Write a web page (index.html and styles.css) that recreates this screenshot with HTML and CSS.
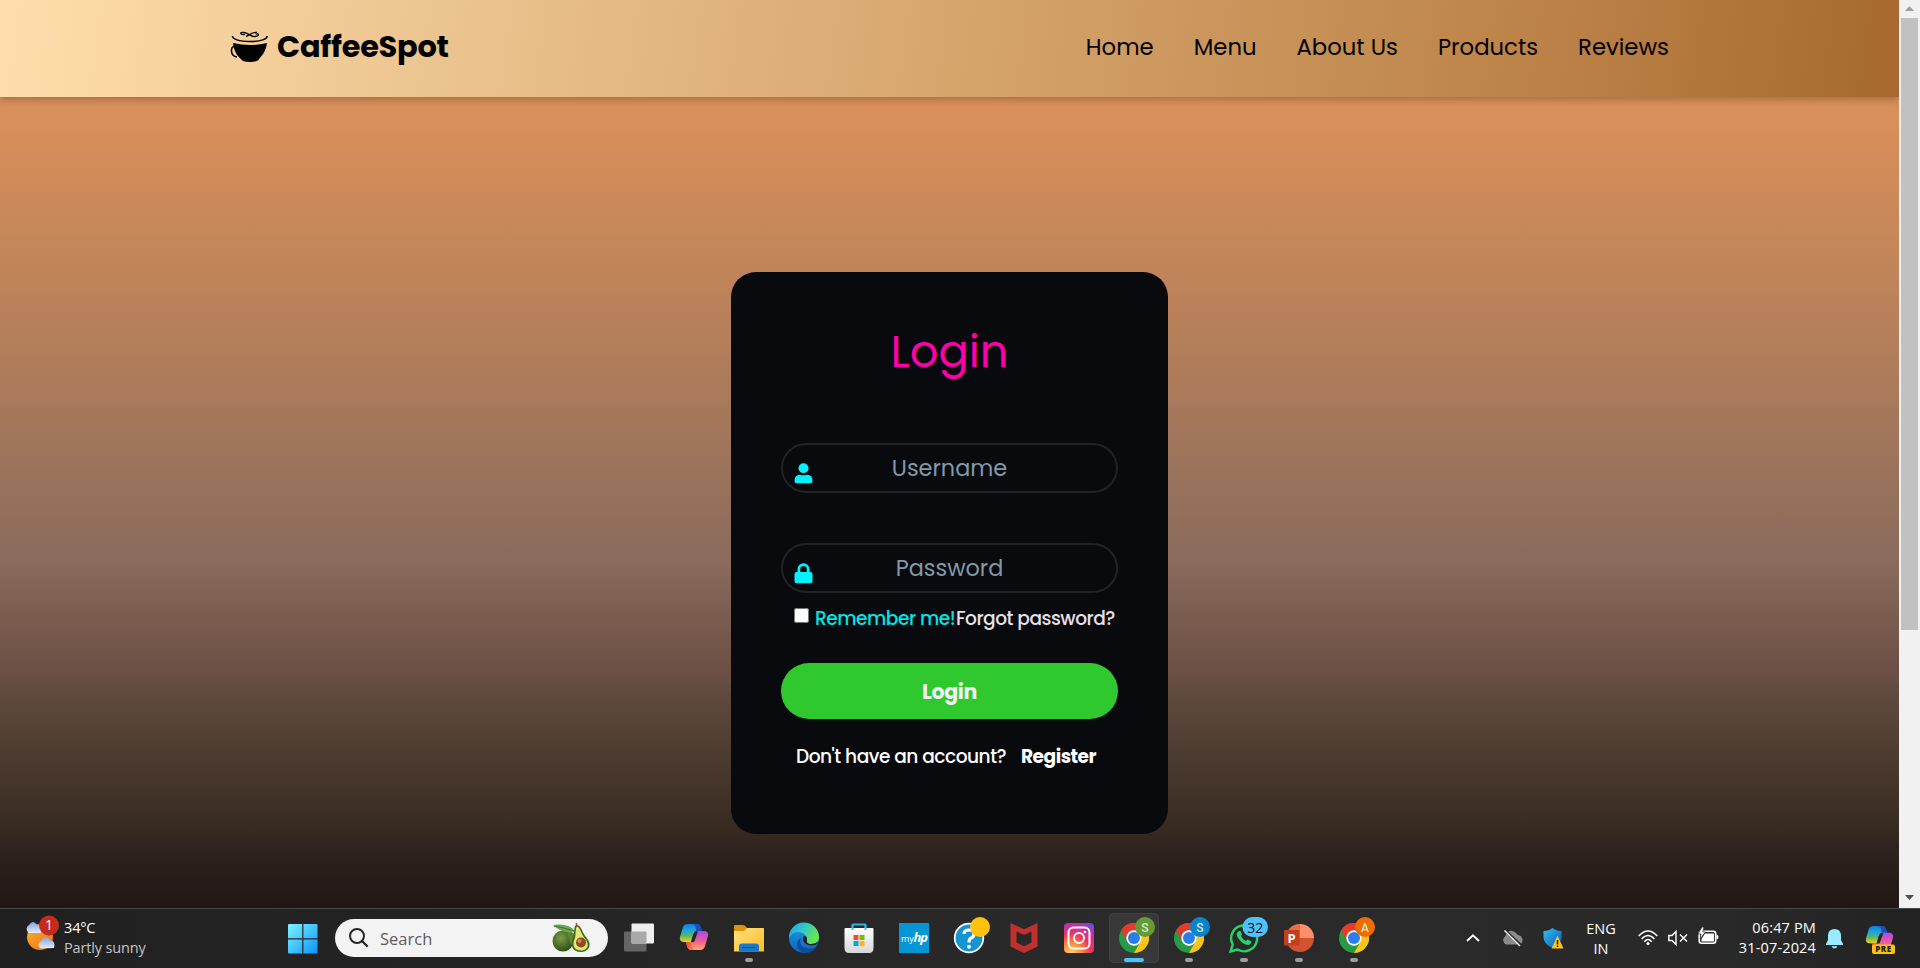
FILE: index.html
```html
<!DOCTYPE html>
<html lang="en">
<head>
<meta charset="utf-8">
<title>CaffeeSpot</title>
<link rel="stylesheet" href="styles.css">
</head>
<body>
<svg class="defs" width="0" height="0" aria-hidden="true">
  <defs>
    <linearGradient id="win" x1="0" y1="0" x2="1" y2="1"><stop offset="0" stop-color="#7df3ff"/><stop offset="1" stop-color="#0a94fb"/></linearGradient>
    <linearGradient id="cloud" x1="0" y1="0" x2="0" y2="1"><stop offset="0" stop-color="#7fa2ea"/><stop offset="1" stop-color="#e3ecfb"/></linearGradient>
    <linearGradient id="sun" x1="0" y1="0" x2="1" y2="1"><stop offset="0" stop-color="#f9b52b"/><stop offset="1" stop-color="#ef6a10"/></linearGradient>
    <linearGradient id="copA" x1="0" y1="0" x2="0" y2="1"><stop offset="0" stop-color="#0f80dc"/><stop offset=".35" stop-color="#1aa5e4"/><stop offset=".65" stop-color="#5bb765"/><stop offset="1" stop-color="#f5d50b"/></linearGradient>
    <linearGradient id="copB" x1="0" y1="0" x2="0" y2="1"><stop offset="0" stop-color="#a24df0"/><stop offset=".5" stop-color="#f0589c"/><stop offset="1" stop-color="#fdab62"/></linearGradient>
    <linearGradient id="copC" x1="0" y1="0" x2="1" y2="0"><stop offset="0" stop-color="#1c62d8"/><stop offset="1" stop-color="#1b3fae"/></linearGradient>
    <linearGradient id="copD" x1="0" y1="0" x2="1" y2="0"><stop offset="0" stop-color="#f5452e"/><stop offset="1" stop-color="#fd9a5c"/></linearGradient>
    <linearGradient id="folder" x1="0" y1="0" x2="1" y2="1"><stop offset="0" stop-color="#ffe182"/><stop offset="1" stop-color="#fdbd24"/></linearGradient>
    <linearGradient id="edgeA" x1="0" y1="0" x2="1" y2=".4"><stop offset="0" stop-color="#259fe0"/><stop offset=".5" stop-color="#2fc5d0"/><stop offset="1" stop-color="#67e64c"/></linearGradient>
    <linearGradient id="edgeB" x1="0" y1="0" x2="0" y2="1"><stop offset="0" stop-color="#1b9de2"/><stop offset="1" stop-color="#1062bd"/></linearGradient>
    <linearGradient id="bag" x1="0" y1="0" x2="0" y2="1"><stop offset="0" stop-color="#fff"/><stop offset="1" stop-color="#d6d6d6"/></linearGradient>
    <linearGradient id="shield" x1="0" y1="0" x2="1" y2="1"><stop offset="0" stop-color="#35c1f5"/><stop offset="1" stop-color="#0b57b4"/></linearGradient>
    <radialGradient id="insta" cx=".25" cy="1" r="1.15"><stop offset="0" stop-color="#ffd75e"/><stop offset=".3" stop-color="#fb8a3a"/><stop offset=".55" stop-color="#f0355c"/><stop offset=".8" stop-color="#c32fa8"/><stop offset="1" stop-color="#6a4ed8"/></radialGradient>
    <radialGradient id="avo" cx=".4" cy=".35" r=".7"><stop offset="0" stop-color="#7d9c48"/><stop offset="1" stop-color="#274a12"/></radialGradient>
    <symbol id="chrome" viewBox="0 0 30 30">
      <circle cx="15" cy="15" r="15" fill="#269a44"/>
      <path d="M2 7.500A15 15 0 0 1 28 7.500H15A7.500 7.500 0 0 0 8.500 18.700Z" fill="#e33b2e"/>
      <path d="M28 7.500A15 15 0 0 1 15 30L21.500 18.700A7.500 7.500 0 0 0 15 7.500Z" fill="#fcc31b"/>
      <circle cx="15" cy="15" r="7.700" fill="#fff"/><circle cx="15" cy="15" r="6" fill="#2b7de9"/>
    </symbol>
    <symbol id="copilot" viewBox="0 0 30 28">
      <path d="M9 1H18Q21 1 22 5L23 8H18Q15 8 14 12L12 19H4Q0 18 1 14L4 4Q5 1 9 1Z" fill="url(#copA)"/>
      <path d="M14 1H18Q21 1 22 5L23 8H17Q17 1 12 1Z" fill="url(#copC)"/>
      <path d="M21 27H12Q9 27 8 23L7 19H12Q15 20 16 16L18 8H26Q30 9 29 13L26 23Q25 27 21 27Z" fill="url(#copB)"/>
      <path d="M17 27H12Q9 27 8 23L7 19H12Q14 27 17 27Z" fill="url(#copD)"/>
      <path d="M16 8.500H19L15 19H12Z" fill="#262626"/>
    </symbol>
  </defs>
</svg>

<div class="browser">
  <div class="page">
    <header class="header">
      <a class="brand">
        <svg class="brand-icon" viewBox="0 0 38 32" width="38" height="32">
          <path d="M3 12Q20 16 37 12C36 20 32 25 29 28Q28 31 20 31Q12 31 11 28C7 25 4 20 3 12Z"/>
          <path d="M5 15C0 16 0 25 7 26" fill="none" stroke="#000" stroke-width="1.600"/>
          <path d="M2.500 5C2 8 9 10.500 20 10.500S37.500 8 37 5" fill="none" stroke="#000" stroke-width="1.500"/>
          <path d="M15 3.500C10 4 9 1 14 1.500C19 2 20 6 25 5.500C30 5 29 2 25.500 3M16 5.500C20 4 21 1 27 1.300" fill="none" stroke="#000" stroke-width="1.300"/>
        </svg>
        <span class="brand-name">CaffeeSpot</span>
      </a>
      <nav class="nav">
        <a>Home</a><a>Menu</a><a>About Us</a><a>Products</a><a>Reviews</a>
      </nav>
    </header>
    <main class="main">
      <form class="card">
        <h1 class="title">Login</h1>
        <div class="field">
          <svg class="field-icon" viewBox="0 0 19 21" width="19" height="21"><circle cx="9.500" cy="5.300" r="5"/><path d="M.5 18Q.5 11.700 6 11.700Q9.500 13 13 11.700Q18.500 11.700 18.500 18Q18.500 20.300 16.500 20.300H2.500Q.5 20.300 .5 18Z"/></svg>
          <input class="input" type="text" placeholder="Username">
        </div>
        <div class="field">
          <svg class="field-icon" viewBox="0 0 19 21" width="19" height="21"><path d="M2.500 9H3.500V6.300A6 6 0 0 1 15.500 6.300V9H16.500Q18.500 9 18.500 11V18.300Q18.500 20.300 16.500 20.300H2.500Q.5 20.300 .5 18.300V11Q.5 9 2.500 9ZM6.200 9H12.800V6.300A3.300 3.300 0 0 0 6.200 6.300Z" fill-rule="evenodd"/></svg>
          <input class="input" type="password" placeholder="Password">
        </div>
        <div class="options">
          <input class="check" type="checkbox"><label class="remember">Remember me!</label><a class="forgot">Forgot password?</a>
        </div>
        <button class="submit" type="button">Login</button>
        <p class="signup"><span class="ask">Don't have an account?</span><a class="register">Register</a></p>
      </form>
    </main>
  </div>
  <div class="scrollbar">
    <svg width="9" height="5" viewBox="0 0 9 5"><path d="M4.500 0L9 5H0Z" fill="#9f9f9f"/></svg>
    <div class="thumb"></div>
    <svg class="down" width="9" height="5" viewBox="0 0 9 5"><path d="M4.500 5L9 0H0Z" fill="#505050"/></svg>
  </div>
</div>

<footer class="taskbar">
  <div class="weather">
    <svg width="36" height="38" viewBox="0 0 36 38">
      <circle cx="15" cy="22" r="13" fill="url(#sun)"/>
      <path d="M4 18A4.500 4.500 0 0 1 4 10Q8 4 12 10Q18 12 16 18Z" fill="url(#cloud)"/>
      <path d="M16 33.500A4 4 0 0 1 16 26Q21 18 25 25Q31 26 29 33Z" fill="url(#cloud)"/>
      <circle cx="24" cy="10.500" r="10" fill="#c42b1c"/>
      <text x="24" y="15" text-anchor="middle" class="badge-count">1</text>
    </svg>
    <div class="weather-text"><span>34°C</span><span class="dim">Partly sunny</span></div>
  </div>
  <svg class="start" width="30" height="30" viewBox="0 0 30 30"><path d="M0 1Q0 0 1 0H14.200V14.200H0ZM15.400 0H28.500Q29.500 0 29.500 1V14.200H15.400ZM0 15.500H14.200V29.500H1Q0 29.500 0 28.500ZM15.400 15.500H29.500V28.500Q29.500 29.500 28.500 29.500H15.400Z" fill="url(#win)"/></svg>
  <div class="search">
    <svg width="20" height="20" viewBox="0 0 20 20"><circle cx="8" cy="8" r="7" fill="none" stroke="#262626" stroke-width="2"/><path d="M13 13L18 18" stroke="#262626" stroke-width="2.400" stroke-linecap="round"/></svg>
    <span class="search-text">Search</span>
    <svg class="avocado" width="38" height="30" viewBox="0 0 38 30">
      <circle cx="10" cy="18" r="10.500" fill="url(#avo)"/><path d="M14 9Q21 8 23 14L18 22Z" fill="#5f8a2d"/>
      <path d="M0 2Q15 0 22 8Q10 12 0 2Z" fill="#6da64b"/><path d="M1 3Q12 5 21 8" stroke="#3d702a" fill="none"/>
      <path d="M23 2C29 2 29 10 33 14C41 23 34 29 28 29C19 29 17 22 20 15C22 11 20 5 23 2Z" fill="#3d6a1b"/>
      <path d="M24 3.500C27 4 28 11 32 15.500C38 23 33 27.500 28 27.500C20 27 19 21 22 15C23 11 22 6 24 3.500Z" fill="#e3e778"/>
      <circle cx="28" cy="19.500" r="5" fill="#8f4a1d"/><circle cx="26.500" cy="18" r="2" fill="#d18a58"/><path d="M23.500 0V4" stroke="#8a5c2c" stroke-width="1.500"/>
    </svg>
  </div>
  <div class="apps">
    <div class="app"><svg width="30" height="30" viewBox="0 0 30 30"><rect y="8.500" width="22.500" height="20" rx="1" fill="#656565"/><rect x="7.500" y=".5" width="22.500" height="20" rx="1" fill="#eee"/><path d="M7.500 8.500H22.500V20.500H7.500Z" fill="#a9a9a9"/></svg></div>
    <div class="app"><svg width="30" height="30" viewBox="0 0 30 30"><use href="#copilot" width="30" height="28"/></svg></div>
    <div class="app"><svg width="30" height="30" viewBox="0 0 30 30"><path d="M0 3Q0 2 1 2H9Q11 2 13 5H29Q30 5 30 6V12H0Z" fill="#dc9409"/><path d="M0 8H10L13 5H29Q30 5 30 6V28.500H0Z" fill="url(#folder)"/><path d="M5 28.500V23.500Q5 20.500 8 20.500H22Q25 20.500 25 23.500V28.500Z" fill="#1678c8"/><path d="M8.500 24.500H21.500" stroke="#0b4e95"/></svg><i class="dot"></i></div>
    <div class="app"><svg width="30" height="30" viewBox="0 0 30 30"><circle cx="15" cy="15" r="15" fill="url(#edgeB)"/><path d="M0 15A15 15 0 0 1 30 14C30 20 25 21 22 21C18 21 17 19 18 17C19 13 14 9 9 9Q3 9 0 15Z" fill="url(#edgeA)"/><path d="M12 15C9 22 15 27 24 25L28 23Q24 30 16 30Q9 28 8 22Q8 17 12 15Z" fill="#0b4e9e"/><path d="M15 13Q18.500 13 18 17Q17 21 22 21Q26 21 28.500 19Q29.500 22 23 22.500Q15 22 14 17Q13.500 14 15 13Z" fill="#242424"/></svg></div>
    <div class="app"><svg width="30" height="30" viewBox="0 0 30 30"><path d="M8.500 7V2Q8.500 1.500 9 1.500H21Q21.500 1.500 21.500 2V7" fill="none" stroke="#2bb5ee" stroke-width="1.800"/><path d="M.5 6Q.5 5 1.500 5H28.500Q29.500 5 29.500 6V25Q29.500 30 25 30H5Q.5 30 .5 25Z" fill="url(#bag)"/><path d="M8.500 1.500V7M21.500 1.500V7" stroke="#2bb5ee" stroke-width="1.800"/><path d="M9.500 12H14.500V17H9.500Z" fill="#f25022"/><path d="M15.500 12H20.500V17H15.500Z" fill="#7fba00"/><path d="M9.500 18H14.500V23H9.500Z" fill="#00a4ef"/><path d="M15.500 18H20.500V23H15.500Z" fill="#ffb900"/></svg></div>
    <div class="app"><svg width="30" height="30" viewBox="0 0 30 30"><rect width="30" height="30" rx=".5" fill="#0796d5"/><text x="2" y="18.500" class="hp-my">my</text><text x="14.500" y="19" class="hp">hp</text></svg></div>
    <div class="app"><svg width="30" height="30" viewBox="0 0 30 30"><circle cx="15" cy="15" r="14.300" fill="#1594d2" stroke="#fff" stroke-width="1.700"/><path d="M10 11Q10 7 15 7Q20 7 20 11Q20 14 17 15Q15 16 15 19.500" fill="none" stroke="#fff" stroke-width="3.200"/><circle cx="15" cy="23.700" r="2" fill="#fff"/><circle cx="26" cy="4" r="10" fill="#ffc20e"/></svg></div>
    <div class="app"><svg width="30" height="30" viewBox="0 0 30 30"><path d="M1.500 0L15 6.300L28.500 0V23.500L15 30L1.500 23.500ZM7.500 8.500V19.500L15 23.200L22.500 19.500V8.500L15 12Z" fill="#c1302d" fill-rule="evenodd"/></svg></div>
    <div class="app"><svg width="30" height="30" viewBox="0 0 30 30"><rect width="30" height="30" rx="4" fill="url(#insta)"/><rect x="4.500" y="4.500" width="21" height="21" rx="5" fill="none" stroke="#fff" stroke-width="2"/><circle cx="15" cy="15" r="5" fill="none" stroke="#fff" stroke-width="2"/><circle cx="21" cy="9" r="1.300" fill="#fff"/></svg></div>
    <div class="app active"><svg width="30" height="30" viewBox="0 0 30 30"><use href="#chrome" width="30" height="30"/><circle cx="26" cy="4" r="10" fill="#639b35"/><text x="26" y="8.500" text-anchor="middle" class="profile">S</text></svg><i class="dot"></i></div>
    <div class="app"><svg width="30" height="30" viewBox="0 0 30 30"><use href="#chrome" width="30" height="30"/><circle cx="26" cy="4" r="10" fill="#0884ce"/><text x="26" y="8.500" text-anchor="middle" class="profile">S</text></svg><i class="dot"></i></div>
    <div class="app"><svg width="30" height="30" viewBox="0 0 30 30"><path d="M1.500 28.500L3.700 21.500A13 13 0 1 1 8.500 26.500Z" fill="none" stroke="#25d366" stroke-width="2.400"/><path d="M10 8Q6 10 9 15Q14 22 19 22Q23 21 22 18L18.500 16.500L17 18Q13 16 12 13L13 11.500L11.500 8Z" fill="#25d366"/><rect x="13.500" y="-6" width="25.500" height="20" rx="10" fill="#4cc2ff"/><text x="26.300" y="9.500" text-anchor="middle" class="unread">32</text></svg><i class="dot"></i></div>
    <div class="app"><svg width="30" height="30" viewBox="0 0 30 30"><path d="M16 1A14 14 0 1 0 30 15L16 15Z" fill="#d35230"/><path d="M16 1A14 14 0 0 1 30 15H16Z" fill="#ff8f6b"/><path d="M16 1A14 14 0 0 0 2 15H16Z" fill="#ed6c47"/><rect y="7" width="15.500" height="15.500" rx="1" fill="#c43e1c"/><text x="7.700" y="19.500" text-anchor="middle" class="ppt">P</text></svg><i class="dot"></i></div>
    <div class="app"><svg width="30" height="30" viewBox="0 0 30 30"><use href="#chrome" width="30" height="30"/><circle cx="26" cy="4" r="10" fill="#ef6c00"/><text x="26" y="8.500" text-anchor="middle" class="profile">A</text></svg><i class="dot"></i></div>
  </div>
  <div class="tray">
    <svg class="chev" width="14" height="8" viewBox="0 0 14 8"><path d="M1 7L7 1.200L13 7" fill="none" stroke="#fff" stroke-width="1.900"/></svg>
    <svg class="cloud" width="21" height="18" viewBox="0 0 21 18"><path d="M5 15.500A4.500 4.500 0 0 1 3 7.500Q7 -2 14 4L16 6Q21 7 20.500 12Q20 15 17 15.500Z" fill="#8b8b8b"/><path d="M3.500 2L19 16.500" stroke="#292929" stroke-width="3"/><path d="M2.500 1.500L18 17" stroke="#fff" stroke-width="1.400"/></svg>
    <svg class="guard" width="21" height="22" viewBox="0 0 21 22"><path d="M9.500 0Q13 3 18.500 3V9Q18.500 16 9.500 20Q.5 16 .5 9V3Q6 3 9.500 0Z" fill="url(#shield)"/><path d="M14.500 7.500L20.500 20.500H8.500Z" fill="#ffc21a"/><path d="M14.500 12V16.500M14.500 17.500V19" stroke="#222" stroke-width="1.500"/></svg>
    <div class="lang"><span>ENG</span><span>IN</span></div>
    <svg class="wifi" width="20" height="16" viewBox="0 0 20 16" fill="none" stroke="#fff" stroke-width="1.500"><path d="M.7 6Q10 -4 19.300 6M3.600 9Q10 2 16.400 9M6.300 11.700Q10 7.500 13.700 11.700"/><circle cx="10" cy="13.500" r="1.500" fill="#fff" stroke="none"/></svg>
    <svg class="sound" width="20" height="16" viewBox="0 0 20 16" fill="none" stroke="#fff" stroke-width="1.400"><path d="M.8 5.500H4L8 1.500V14.500L4 10.500H.8ZM12 4.500L19 11.500M19 4.500L12 11.500"/></svg>
    <svg class="battery" width="21" height="18" viewBox="0 0 21 18"><rect x="1.200" y="4.200" width="16.500" height="12" rx="2.500" fill="none" stroke="#fff" stroke-width="1.600"/><path d="M3.500 14.500V12L7 6.500H16V14.500Z" fill="#fff"/><path d="M18.500 7.500Q20.500 8 20.500 10T18.500 12.500Z" fill="#fff"/><path d="M4 0L0 7H3L2 12L7.500 5H4.800L6 0Z" fill="#fff" stroke="#292929" stroke-width=".7"/></svg>
    <div class="clock"><span>06:47 PM</span><span>31-07-2024</span></div>
    <svg class="bell" width="17" height="20" viewBox="0 0 17 20"><path d="M8.500 0Q14.500 0 15 6V11L17 15V16H0V15L2 11V6Q2.500 0 8.500 0ZM5.500 17.200H11.500Q10.500 19.500 8.500 19.500T5.500 17.200Z" fill="#99ebff"/></svg>
    <svg class="pre" width="30" height="30" viewBox="0 0 30 30"><use href="#copilot" width="29" height="27"/><rect x="7" y="19.500" width="23" height="9.500" rx="2" fill="#ffc20e"/><text x="18.500" y="27.300" text-anchor="middle" class="pre-text">PRE</text></svg>
  </div>
</footer>
</body>
</html>
```
FILE: styles.css
```css
* { box-sizing: border-box; }
body { margin: 0; width: 1920px; height: 968px; overflow: hidden; display: flex; flex-direction: column; font-family: Poppins, Inter, sans-serif; }
.defs { position: absolute; }
.browser { display: flex; height: 908px; }
.page { width: 1899px; display: flex; flex-direction: column; background: linear-gradient(180deg, #da905a 0, #d98f59 120px, #bd835a 290px, #8a6b5c 560px, #6a4e43 678px, #604a3e 692px, #35291f 835px, #30241f 845px, #201614 908px); }
.header { height: 97px; flex: none; padding: 0 230px; display: flex; justify-content: space-between; align-items: center; background: linear-gradient(98deg, #ffdead 0%, #d2a067 55%, #bb8146 82%, #a7692d 100%); box-shadow: 0 3px 7px rgba(0,0,0,.22); }
.brand { display: flex; align-items: center; gap: 9px; margin-top: -4px; }
.brand-icon { overflow: visible; }
.brand-name { font-size: 30.4px; font-weight: 700; letter-spacing: -.25px; line-height: 40px; color: #000; }
.nav { display: flex; gap: 40px; font-size: 22.75px; line-height: 32px; color: #000; margin-top: -4px; }
.nav a { white-space: nowrap; }
.main { flex: 1; display: flex; justify-content: center; align-items: flex-start; padding-top: 175px; }
.card { width: 437px; height: 562px; border-radius: 25px; background: #090a0d; padding: 50px; display: flex; flex-direction: column; }
.title { margin: 0 0 61px; height: 60px; line-height: 60px; text-align: center; font-size: 44.8px; font-weight: 400; color: #ff00a8; }
.field { position: relative; height: 50px; margin-bottom: 50px; }
.field + .field { margin-bottom: 0; }
.field-icon { position: absolute; left: 13px; top: 20px; fill: #00f3ff; }
.input { width: 337px; height: 50px; border: 2px solid #222327; border-radius: 25px; background: transparent; text-align: center; font: 22.4px Poppins, Inter, sans-serif; color: #8aa0b2; padding: 0 20px; }
.input::placeholder { color: #8299aa; }
.options { display: flex; height: 40px; margin-top: 5px; margin-bottom: 25px; align-items: center; font-size: 18.6px; font-weight: 500; letter-spacing: -.5px; white-space: nowrap; }
.check { width: 15px; height: 15px; margin: -5px 6px 0 13px; }
.remember { color: #00e5e5; width: 141px; }
.forgot { color: #e8e0e6; }
.submit { height: 56px; border: 0; border-radius: 28px; background: #2fc92f; color: #f2f2f2; font: 700 20.5px Poppins, Inter, sans-serif; letter-spacing: -.3px; flex: none; }
.signup { display: flex; margin: 25px 0 0 15px; color: #fff; font-size: 18.6px; font-weight: 500; letter-spacing: -.5px; line-height: 26px; white-space: nowrap; }
.ask { width: 225px; }
.register { font-weight: 700; }
.scrollbar { width: 21px; background: #f1f1f1; display: flex; flex-direction: column; align-items: center; padding: 6px 0 8px; }
.scrollbar svg { flex: none; }
.thumb { width: 17px; height: 612px; margin-top: 7px; background: #c1c1c1; }
.down { margin-top: auto; }
.taskbar { height: 60px; border-top: 1px solid #484848; background: linear-gradient(90deg, #202020, #2a2a2a 60%, #292929 90%, #222); display: flex; color: #fff; font-family: "Segoe UI", "Open Sans", sans-serif; font-size: 14.500px; }
.taskbar svg { flex: none; overflow: visible; }
.weather { width: 288px; flex: none; padding: 6px 0 0 25px; display: flex; gap: 3px; letter-spacing: -.15px; }
.weather-text, .lang, .clock { display: flex; flex-direction: column; line-height: 20px; white-space: nowrap; }
.weather-text { margin-top: 3px; }
.dim { color: #c4c4c4; }
.badge-count { font-size: 14px; fill: #fff; }
.start { margin-top: 15px; }
.search { width: 273px; flex: none; height: 38px; border-radius: 19px; margin: 10px 0 0 17px; background: #f3f3f3; display: flex; align-items: center; padding: 0 17px 0 14px; }
.search-text { margin-left: 11px; color: #5c5c5c; font-size: 16.500px; }
.avocado { margin-left: auto; }
.apps { display: flex; flex: none; margin: 4px 0 0 6px; }
.app { width: 50px; height: 50px; margin-right: 5px; padding: 10px; position: relative; border-radius: 5px; }
.active { background: #383838; box-shadow: inset 0 0 0 1px #424242; }
.dot { position: absolute; left: 21px; bottom: 1px; width: 8px; height: 4px; border-radius: 2px; background: #9d9d9d; }
.active .dot { left: 15px; width: 20px; background: #4cc2ff; }
.hp-my { font-size: 9px; fill: #fff; }
.hp { font-size: 13px; font-weight: 700; font-style: italic; fill: #fff; letter-spacing: -1px; }
.profile { font: 500 12px Roboto, sans-serif; fill: #d9e8d0; }
.unread { font-size: 14px; fill: #111; }
.ppt { font-size: 13px; font-weight: 700; fill: #fff; }
.tray { display: flex; flex: none; margin-left: 82px; }
.chev { margin-top: 25px; }
.cloud { margin: 20px 0 0 22px; }
.guard { margin: 19px 0 0 20px; }
.lang { width: 40px; margin: 10px 0 0 17px; text-align: center; }
.wifi { margin: 21px 0 0 17px; }
.sound { margin: 21px 0 0 10px; }
.battery { margin: 18px 0 0 10px; }
.clock { width: 90px; margin: 9px 0 0 7px; text-align: right; letter-spacing: .15px; }
.bell { margin: 20px 0 0 10px; }
.pre { margin: 16px 0 0 22px; }
.pre-text { font-size: 8px; font-weight: 800; fill: #222; letter-spacing: .5px; }
```
